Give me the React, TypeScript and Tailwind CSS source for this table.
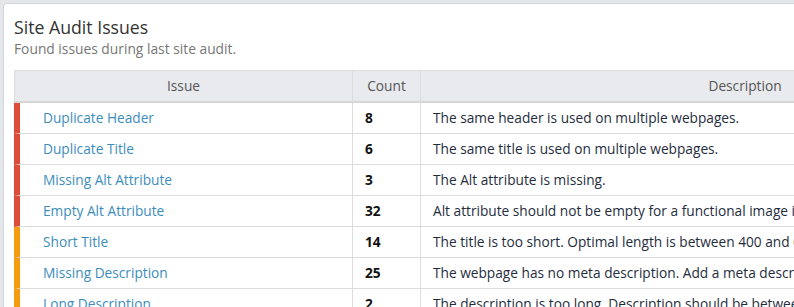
const ISSUES = [
  { name: "Duplicate Header", count: 8, desc: "The same header is used on multiple webpages.", level: "error" },
  { name: "Duplicate Title", count: 6, desc: "The same title is used on multiple webpages.", level: "error" },
  { name: "Missing Alt Attribute", count: 3, desc: "The Alt attribute is missing.", level: "error" },
  { name: "Empty Alt Attribute", count: 32, desc: "Alt attribute should not be empty for a functional image in a link.", level: "error" },
  { name: "Short Title", count: 14, desc: "The title is too short. Optimal length is between 400 and 600 pixels.", level: "warning" },
  { name: "Missing Description", count: 25, desc: "The webpage has no meta description. Add a meta description to the page.", level: "warning" },
  { name: "Long Description", count: 2, desc: "The description is too long. Description should be between 400 and 920 pixels.", level: "warning" },
];

export default function App() {
  return (
    <div className="w-[794px] h-[307px] overflow-hidden bg-[#e4e6ea] pl-[3px] pt-[3px] font-['Open_Sans',sans-serif]">
      <div className="w-[1100px] h-[400px] bg-white rounded-tl-[4px] border-l border-t border-[#d2d6de] pt-[11px] pl-[10px]">
        {/* Header */}
        <h3 className="text-[17.7px] leading-[24px] text-[#333]">Site Audit Issues</h3>
        <p className="text-[13.8px] leading-[18px] text-[#777] mt-[1px]">Found issues during last site audit.</p>

        {/* Table */}
        <table className="mt-[12px] w-[1056px] table-fixed border-separate border-spacing-0 text-[13.7px]">
          <thead>
            <tr className="bg-[#e9eaee] text-[#555] h-[33px]">
              <th className="w-[339px] font-normal border-t border-l border-r border-b-2 border-[#dcdcdc] border-b-[#d6d6d6]">Issue</th>
              <th className="w-[68px] font-normal border-t border-r border-b-2 border-[#dcdcdc] border-b-[#d6d6d6]">Count</th>
              <th className="font-normal border-t border-r border-b-2 border-[#dcdcdc] border-b-[#d6d6d6]">Description</th>
            </tr>
          </thead>
          <tbody>
            {ISSUES.map((issue) => (
              <tr key={issue.name} className="h-[31px]">
                <td
                  className={`border-b border-r border-[#dcdcdc] border-l-[6px] pl-[23px] pt-[1px] ${
                    issue.level === "error" ? "border-l-[#dd4b39]" : "border-l-[#f39c12]"
                  }`}
                >
                  <a className="text-[#3c8dbc]">{issue.name}</a>
                </td>
                <td className="border-b border-r border-[#dcdcdc] pl-[12px] pt-[1px] font-bold text-[#111]">{issue.count}</td>
                <td className="border-b border-r border-[#dcdcdc] pl-[12px] pt-[1px] text-[#1f2d3d] whitespace-nowrap overflow-hidden">{issue.desc}</td>
              </tr>
            ))}
          </tbody>
        </table>
      </div>
    </div>
  );
}
